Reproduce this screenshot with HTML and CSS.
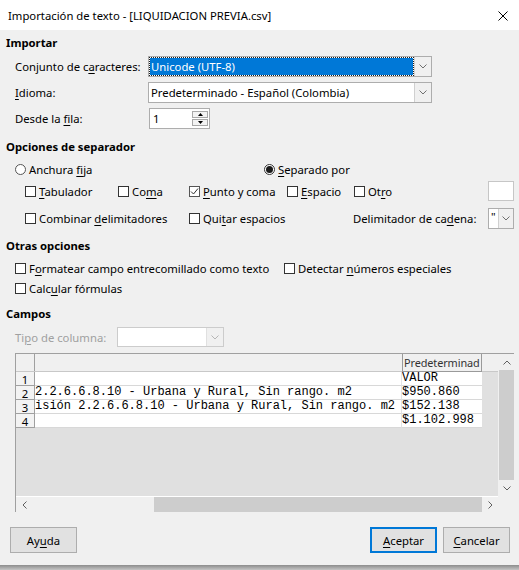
FILE: index.html
```html
<!DOCTYPE html>
<html lang="es">
<head>
<meta charset="utf-8">
<title>Importación de texto</title>
<link rel="stylesheet" href="styles.css">
</head>
<body>
<div class="dialog">
  <header class="titlebar">
    <span class="title">Importación de texto - [LIQUIDACION PREVIA.csv]</span>
    <svg class="close" width="10" height="10" viewBox="0 0 10 10"><path d="M0.5 0.5 L9.5 9.5 M9.5 0.5 L0.5 9.5" stroke="#000" stroke-width="1" fill="none"/></svg>
  </header>

  <main class="content">
    <h2 class="heading h-importar">Importar</h2>
    <div class="form-row row-charset">
      <span class="lbl">Conjunto de c<u>a</u>racteres:</span>
      <div class="combo combo-wide focused">
        <span class="combo-text">Unicode (UTF-8)</span>
        <span class="combo-btn"><svg width="8" height="5" viewBox="0 0 8 5"><path d="M0.5 0.5 L4 4 L7.5 0.5" stroke="#707070" fill="none"/></svg></span>
      </div>
    </div>
    <div class="form-row row-lang">
      <span class="lbl"><u>I</u>dioma:</span>
      <div class="combo combo-wide">
        <span class="combo-text">Predeterminado - Español (Colombia)</span>
        <span class="combo-btn"><svg width="8" height="5" viewBox="0 0 8 5"><path d="M0.5 0.5 L4 4 L7.5 0.5" stroke="#707070" fill="none"/></svg></span>
      </div>
    </div>
    <div class="form-row row-from">
      <span class="lbl">Desde la <u>f</u>ila:</span>
      <div class="spin">
        <span class="spin-text">1</span>
        <span class="spin-btns">
          <span class="spin-btn"><svg width="5" height="3" viewBox="0 0 5 3"><path d="M0 3 L2.5 0 L5 3 Z" fill="#000"/></svg></span>
          <span class="spin-btn"><svg width="5" height="3" viewBox="0 0 5 3"><path d="M0 0 L2.5 3 L5 0 Z" fill="#000"/></svg></span>
        </span>
      </div>
    </div>

    <h2 class="heading h-sep">Opciones de separador</h2>
    <div class="radio-row">
      <label class="opt opt-fixed"><span class="radio"></span><span>Anchura <u>f</u>ija</span></label>
      <label class="opt"><span class="radio on"></span><span><u>S</u>eparado por</span></label>
    </div>
    <div class="check-grid">
      <label class="opt"><span class="box"></span><span><u>T</u>abulador</span></label>
      <label class="opt"><span class="box"></span><span>Co<u>m</u>a</span></label>
      <label class="opt"><span class="box checked"><svg width="9" height="9" viewBox="0 0 9 9"><path d="M1 4.5 L3.5 7 L8 1.5" stroke="#333" stroke-width="1" fill="none"/></svg></span><span><u>P</u>unto y coma</span></label>
      <label class="opt"><span class="box"></span><span><u>E</u>spacio</span></label>
      <label class="opt"><span class="box"></span><span>Ot<u>r</u>o</span></label>
      <span class="textbox other"></span>

      <label class="opt span2"><span class="box"></span><span>Combinar <u>d</u>elimitadores</span></label>
      <label class="opt span2"><span class="box"></span><span>Qui<u>t</u>ar espacios</span></label>
      <span class="delim-lbl">Delimitador de ca<u>d</u>ena:</span>
      <div class="mini-combo">
        <span class="mini-text">"</span>
        <span class="combo-btn"><svg width="8" height="5" viewBox="0 0 8 5"><path d="M0.5 0.5 L4 4 L7.5 0.5" stroke="#707070" fill="none"/></svg></span>
      </div>
    </div>

    <h2 class="heading h-other">Otras opciones</h2>
    <div class="opt-row">
      <label class="opt opt-format"><span class="box"></span><span>F<u>o</u>rmatear campo entrecomillado como texto</span></label>
      <label class="opt"><span class="box"></span><span>Detectar <u>n</u>úmeros especiales</span></label>
    </div>
    <div class="opt-row">
      <label class="opt"><span class="box"></span><span>Calc<u>u</u>lar fórmulas</span></label>
    </div>

    <h2 class="heading h-fields">Campos</h2>
    <div class="form-row row-type">
      <span class="lbl lbl-type disabled">Ti<u>p</u>o de columna:</span>
      <div class="combo combo-type disabled">
        <span class="combo-text"></span>
        <span class="combo-btn"><svg width="8" height="5" viewBox="0 0 8 5"><path d="M0.5 0.5 L4 4 L7.5 0.5" stroke="#b5b5b5" fill="none"/></svg></span>
      </div>
    </div>

    <div class="preview">
      <div class="sheet">
        <div class="sheet-head">
          <div class="corner"></div>
          <div class="colhead c1"></div>
          <div class="colhead c2">Predeterminad</div>
        </div>
        <div class="sheet-row">
          <div class="rowhead">1</div><div class="cell c1"></div><div class="cell c2">VALOR</div>
        </div>
        <div class="sheet-row">
          <div class="rowhead">2</div><div class="cell c1">2.2.6.6.8.10 - Urbana y Rural, Sin rango. m2</div><div class="cell c2">$950.860</div>
        </div>
        <div class="sheet-row">
          <div class="rowhead">3</div><div class="cell c1">isión 2.2.6.6.8.10 - Urbana y Rural, Sin rango. m2</div><div class="cell c2">$152.138</div>
        </div>
        <div class="sheet-row">
          <div class="rowhead">4</div><div class="cell c1"></div><div class="cell c2">$1.102.998</div>
        </div>
      </div>
      <div class="vscroll">
        <span class="arrow"><svg width="8" height="5" viewBox="0 0 8 5"><path d="M0.5 4.5 L4 1 L7.5 4.5" stroke="#606060" fill="none"/></svg></span>
        <span class="vthumb"></span>
        <span class="arrow"><svg width="8" height="5" viewBox="0 0 8 5"><path d="M0.5 0.5 L4 4 L7.5 0.5" stroke="#606060" fill="none"/></svg></span>
      </div>
      <div class="hscroll">
        <span class="arrow"><svg width="5" height="8" viewBox="0 0 5 8"><path d="M4.5 0.5 L1 4 L4.5 7.5" stroke="#606060" fill="none"/></svg></span>
        <span class="htrack"><span class="hthumb"></span></span>
        <span class="arrow"><svg width="5" height="8" viewBox="0 0 5 8"><path d="M0.5 0.5 L4 4 L0.5 7.5" stroke="#606060" fill="none"/></svg></span>
      </div>
      <div class="scorner"></div>
    </div>
  </main>

  <footer class="buttons">
    <button class="btn">Ay<u>u</u>da</button>
    <span class="spacer"></span>
    <button class="btn default"><u>A</u>ceptar</button>
    <button class="btn"><u>C</u>ancelar</button>
  </footer>
  <div class="frame-bottom"></div>
</div>
</body>
</html>
```

FILE: styles.css
```css
* { box-sizing: border-box; }

html, body {
  margin: 0;
  padding: 0;
}

body {
  background: #f0f0f0;
  font-family: "Noto Sans", "Open Sans", sans-serif;
  font-size: 11.3px;
  color: #000;
}

u { text-decoration: underline; text-underline-offset: 2px; }

.dialog {
  width: 519px;
  height: 570px;
  display: flex;
  flex-direction: column;
  overflow: hidden;
}

/* Title bar */
.titlebar {
  height: 30px;
  flex: none;
  background: #fff;
  display: flex;
  align-items: center;
  justify-content: space-between;
  padding: 0 11px 0 8px;
  font-size: 11.3px;
}

.close { display: block; margin-top: 1px; }

/* Content */
.content {
  padding-left: 6px;
  display: flex;
  flex-direction: column;
  flex: none;
}

.heading {
  margin: 0;
  height: 20px;
  line-height: 20px;
  font-size: 11.3px;
  font-weight: bold;
}

.h-importar { margin-top: 3px; }
.h-sep { margin-top: 8px; }
.h-other { margin-top: 8px; }
.h-fields { margin-top: 6px; }

.form-row {
  display: flex;
  align-items: center;
  height: 21px;
  padding-left: 9px;
}

.row-charset { margin-top: 3px; }
.row-lang { margin-top: 5px; }
.row-from { margin-top: 5px; }
.row-type { margin-top: 3px; height: 20px; }

.lbl { width: 133px; flex: none; white-space: nowrap; }
.lbl-type { width: 102px; }
.disabled { color: #a0a0a0; }

.combo {
  display: flex;
  height: 21px;
  border: 1px solid #adadad;
  background: #fff;
}

.combo-wide { width: 284px; }

.combo-text {
  flex: 1;
  padding-left: 2px;
  line-height: 19px;
  white-space: nowrap;
  overflow: hidden;
}

.combo.focused .combo-text {
  background: #0078d7;
  color: #fff;
  margin: 1px;
  padding-left: 1px;
  line-height: 17px;
  outline: 1px dotted #1e1e1e;
  outline-offset: 0;
}

.combo-btn {
  width: 17px;
  flex: none;
  display: flex;
  align-items: center;
  justify-content: center;
  background: #f0f0f0;
  border-left: 1px solid #d0d0d0;
}

.combo-type {
  width: 107px;
  height: 20px;
  border-color: #cccccc;
}

.combo-type .combo-btn { border-left-color: #e0e0e0; }

/* Spinner */
.spin {
  width: 61px;
  height: 21px;
  margin-left: 1px;
  background: #fff;
  border: 1px solid #adadad;
  display: flex;
  align-items: center;
}

.spin-text { flex: 1; padding-left: 3px; }

.spin-btns {
  width: 16px;
  height: 15px;
  margin-right: 1px;
  display: flex;
  flex-direction: column;
  gap: 1px;
}

.spin-btn {
  flex: 1;
  border: 1px solid #a8a8a8;
  background: #f3f3f3;
  display: flex;
  align-items: center;
  justify-content: center;
}

.spin-btn svg { display: block; }

/* Options */
.opt {
  display: flex;
  align-items: center;
  gap: 3px;
  white-space: nowrap;
}

.box {
  width: 11px;
  height: 11px;
  flex: none;
  border: 1px solid #333;
  background: #fff;
  display: flex;
  align-items: center;
  justify-content: center;
}

.box.checked { border-color: #555; }
.box svg { display: block; }

.radio {
  width: 11px;
  height: 11px;
  flex: none;
  border: 1px solid #555;
  border-radius: 50%;
  background: #fff;
  display: flex;
  align-items: center;
  justify-content: center;
}

.radio.on { border-color: #333; }
.radio.on::after {
  content: "";
  width: 7px;
  height: 7px;
  border-radius: 50%;
  background: #1a1a1a;
}

.radio-row {
  display: flex;
  align-items: center;
  height: 20px;
  padding-left: 9px;
  margin-top: 2px;
}

.opt-fixed { width: 249px; }

.check-grid {
  display: grid;
  grid-template-columns: 93px 71px 98px 67px 134px 26px;
  grid-auto-rows: 20px;
  row-gap: 7px;
  align-items: center;
  padding-left: 19px;
  margin-top: 2px;
}

.span2 { grid-column: span 2; }

.textbox.other {
  width: 26px;
  height: 20px;
  background: #fff;
  border: 1px solid #c6c6c6;
}

.delim-lbl { white-space: nowrap; margin-left: -1px; }

.mini-combo {
  width: 26px;
  height: 21px;
  display: flex;
  background: #fff;
  border: 1px solid #adadad;
}

.mini-text {
  width: 9px;
  flex: none;
  line-height: 15px;
  padding-left: 2px;
}

.mini-combo .combo-btn { width: 15px; }

.opt-row {
  display: flex;
  align-items: center;
  height: 20px;
  padding-left: 9px;
}

.h-other + .opt-row { margin-top: 2px; }

.opt-format { width: 269px; }

/* Preview grid */
.preview {
  margin-top: 6px;
  margin-left: 9px;
  width: 498px;
  height: 159px;
  display: grid;
  grid-template-columns: 482px 16px;
  grid-template-rows: 143px 16px;
  border-left: 1px solid #a0a0a0;
}

.sheet {
  background: #e0e0e0;
  border-top: 1px solid #a0a0a0;
  overflow: hidden;
  font-family: "Liberation Mono", monospace;
  font-size: 12px;
}

.sheet-head {
  display: flex;
  height: 18px;
  background: #f0f0f0;
  border-bottom: 1px solid #c8c8c8;
}

.corner {
  width: 19px;
  border-right: 1px solid #a0a0a0;
}

.colhead { height: 18px; }
.colhead.c1 { width: 367px; }
.colhead.c2 {
  width: 80px;
  border: 1px solid #9a9a9a;
  border-top: none;
  font-family: "Noto Sans", sans-serif;
  font-size: 10.9px;
  letter-spacing: -0.1px;
  color: #333;
  line-height: 17px;
  padding-left: 1px;
  white-space: nowrap;
}

.sheet-row {
  display: flex;
  height: 14px;
}

.rowhead {
  width: 19px;
  flex: none;
  background: #f3f3f3;
  border-right: 1px solid #a0a0a0;
  border-bottom: 1px solid #a0a0a0;
  font-family: "Noto Sans", sans-serif;
  font-size: 11.3px;
  line-height: 14px;
  text-align: center;
  padding-top: 1px;
}

.cell {
  flex: none;
  background: #fff;
  border-bottom: 1px solid #d8d8d8;
  line-height: 12px;
  white-space: nowrap;
  overflow: hidden;
  color: #000;
}

.cell.c1 { width: 367px; border-right: 1px solid #e4e4e4; }
.cell.c2 { width: 80px; }

.vscroll {
  background: #f0f0f0;
  border-top: 1px solid #a0a0a0;
  display: flex;
  flex-direction: column;
  align-items: center;
  padding: 0 0 0 1px;
}

.vscroll .arrow {
  height: 16px;
  display: flex;
  align-items: center;
  justify-content: center;
  flex: none;
}

.vthumb {
  width: 15px;
  flex: 1;
  background: #cdcdcd;
}

.hscroll {
  background: #f0f0f0;
  border-top: 1px solid #fff;
  display: flex;
  align-items: stretch;
}

.hscroll .arrow {
  width: 16px;
  flex: none;
  display: flex;
  align-items: center;
  justify-content: center;
}

.htrack {
  flex: 1;
  display: flex;
  padding-left: 122px;
}

.hthumb {
  flex: 1;
  background: #cdcdcd;
}

.scorner {
  background: #f0f0f0;
}

/* Buttons */
.buttons {
  margin-top: 15px;
  display: flex;
  gap: 6px;
  padding: 0 9px 0 10px;
  height: 26px;
  flex: none;
}

.spacer { flex: 1; }

.btn {
  width: 67px;
  height: 26px;
  background: #e1e1e1;
  border: 1px solid #adadad;
  font-family: "Noto Sans", sans-serif;
  font-size: 11.3px;
  color: #000;
  padding: 0;
}

.btn.default {
  border-color: #0078d7;
  box-shadow: inset 0 0 0 1px #0078d7;
}

.frame-bottom {
  margin-top: 12px;
  height: 5px;
  flex: none;
  background: linear-gradient(#8c8c8c, #c4c4c4);
}
```
